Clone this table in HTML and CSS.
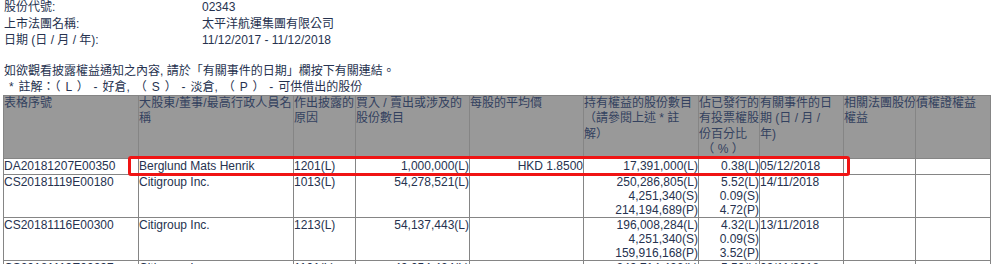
FILE: index.html
```html
<!DOCTYPE html>
<html lang="zh-Hant">
<head>
<meta charset="utf-8">
<title>披露權益</title>
<link rel="stylesheet" href="styles.css">
</head>
<body>
<div class="page">
  <div class="info">
    <div class="lbl">股份代號:</div><div class="val">02343</div>
    <div class="lbl">上市法團名稱:</div><div class="val">太平洋航運集團有限公司</div>
    <div class="lbl">日期 (日 / 月 / 年):</div><div class="val">11/12/2017 - 11/12/2018</div>
  </div>
  <div class="notice">
    <div>如欲觀看披露權益通知之內容, 請於「有關事件的日期」欄按下有關連結。</div>
    <div class="note">&nbsp;* 註解：（ L ） - 好倉, （ S ） - 淡倉, （ P ） - 可供借出的股份</div>
  </div>
  <div class="tablewrap">
    <table class="grid">
      <colgroup>
        <col class="c1"><col class="c2"><col class="c3"><col class="c4"><col class="c5">
        <col class="c6"><col class="c7"><col class="c8"><col class="c9"><col class="c10">
      </colgroup>
      <thead>
        <tr>
          <th>表格序號</th>
          <th class="wide">大股東/董事/最高行政人員名<br>稱</th>
          <th>作出披露的<br>原因</th>
          <th>買入 / 賣出或涉及的<br>股份數目</th>
          <th>每股的平均價</th>
          <th>持有權益的股份數目<br>（請參閱上述 * 註<br>解）</th>
          <th>佔已發行的<br>有投票權股<br>份百分比<br>&nbsp;（ % ）</th>
          <th>有關事件的日<br>期 (日 / 月 /<br>年)</th>
          <th>相關法團股份<br>權益</th>
          <th>債權證權益</th>
        </tr>
      </thead>
      <tbody>
        <tr class="r1">
          <td>DA20181207E00350</td>
          <td>Berglund Mats Henrik</td>
          <td>1201(L)</td>
          <td class="num">1,000,000(L)</td>
          <td class="num">HKD 1.8500</td>
          <td class="num">17,391,000(L)</td>
          <td class="num">0.38(L)</td>
          <td>05/12/2018</td>
          <td></td>
          <td></td>
        </tr>
        <tr>
          <td>CS20181119E00180</td>
          <td>Citigroup Inc.</td>
          <td>1013(L)</td>
          <td class="num">54,278,521(L)</td>
          <td class="num"></td>
          <td class="num">250,286,805(L)<br>4,251,340(S)<br>214,194,689(P)</td>
          <td class="num">5.52(L)<br>0.09(S)<br>4.72(P)</td>
          <td>14/11/2018</td>
          <td></td>
          <td></td>
        </tr>
        <tr>
          <td>CS20181116E00300</td>
          <td>Citigroup Inc.</td>
          <td>1213(L)</td>
          <td class="num">54,137,443(L)</td>
          <td class="num"></td>
          <td class="num">196,008,284(L)<br>4,251,340(S)<br>159,916,168(P)</td>
          <td class="num">4.32(L)<br>0.09(S)<br>3.52(P)</td>
          <td>13/11/2018</td>
          <td></td>
          <td></td>
        </tr>
        <tr>
          <td>CS20181113E00297</td>
          <td>Citigroup Inc.</td>
          <td>1101(L)</td>
          <td class="num">49,054,424(L)</td>
          <td class="num"></td>
          <td class="num">249,714,426(L)<br>4,251,340(S)<br>210,036,126(P)</td>
          <td class="num">5.50(L)<br>0.09(S)<br>4.63(P)</td>
          <td>09/11/2018</td>
          <td></td>
          <td></td>
        </tr>
      </tbody>
    </table>
    <div class="highlight"></div>
  </div>
</div>
</body>
</html>
```

FILE: styles.css
```css
html, body {
  margin: 0;
  padding: 0;
  background: #ffffff;
}

body {
  font-family: "Liberation Sans", Arial, "Noto Sans CJK TC", sans-serif;
  font-size: 12px;
  color: #26324f;
  overflow: hidden;
}

.page {
  padding-left: 3px;
}

.info {
  display: grid;
  grid-template-columns: 198px auto;
  line-height: 16.5px;
  padding-left: 1px;
  margin-top: -1px;
}

.notice {
  margin-top: 14px;
  line-height: 16px;
  padding-left: 1px;
}

.notice .note {
  word-spacing: 1.6px;
}

.tablewrap {
  position: relative;
}

.grid {
  border-collapse: collapse;
  table-layout: fixed;
  width: 987px;
}

.grid th,
.grid td {
  border: 1px solid #858585;
  padding: 0;
  vertical-align: top;
  text-align: left;
  overflow: hidden;
  white-space: nowrap;
}

.grid th {
  background: #999999;
  color: #33415f;
  font-weight: normal;
  line-height: 15.5px;
  height: 62px;
}

.grid th.wide {
  letter-spacing: 0.15px;
}

.grid td {
  line-height: 14px;
  height: 42px;
}

.grid tr.r1 td {
  line-height: 15px;
  height: 15px;
}

.grid td.num {
  text-align: right;
}

.c1 { width: 135px; }
.c2 { width: 155px; }
.c3 { width: 62px; }
.c4 { width: 114px; }
.c5 { width: 114px; }
.c6 { width: 115px; }
.c7 { width: 61px; }
.c8 { width: 84px; }
.c9 { width: 72px; }
.c10 { width: 75px; }

.highlight {
  position: absolute;
  left: 125px;
  top: 61px;
  width: 716px;
  height: 14px;
  border: 3px solid #f01414;
  border-radius: 3px;
  pointer-events: none;
}
```
